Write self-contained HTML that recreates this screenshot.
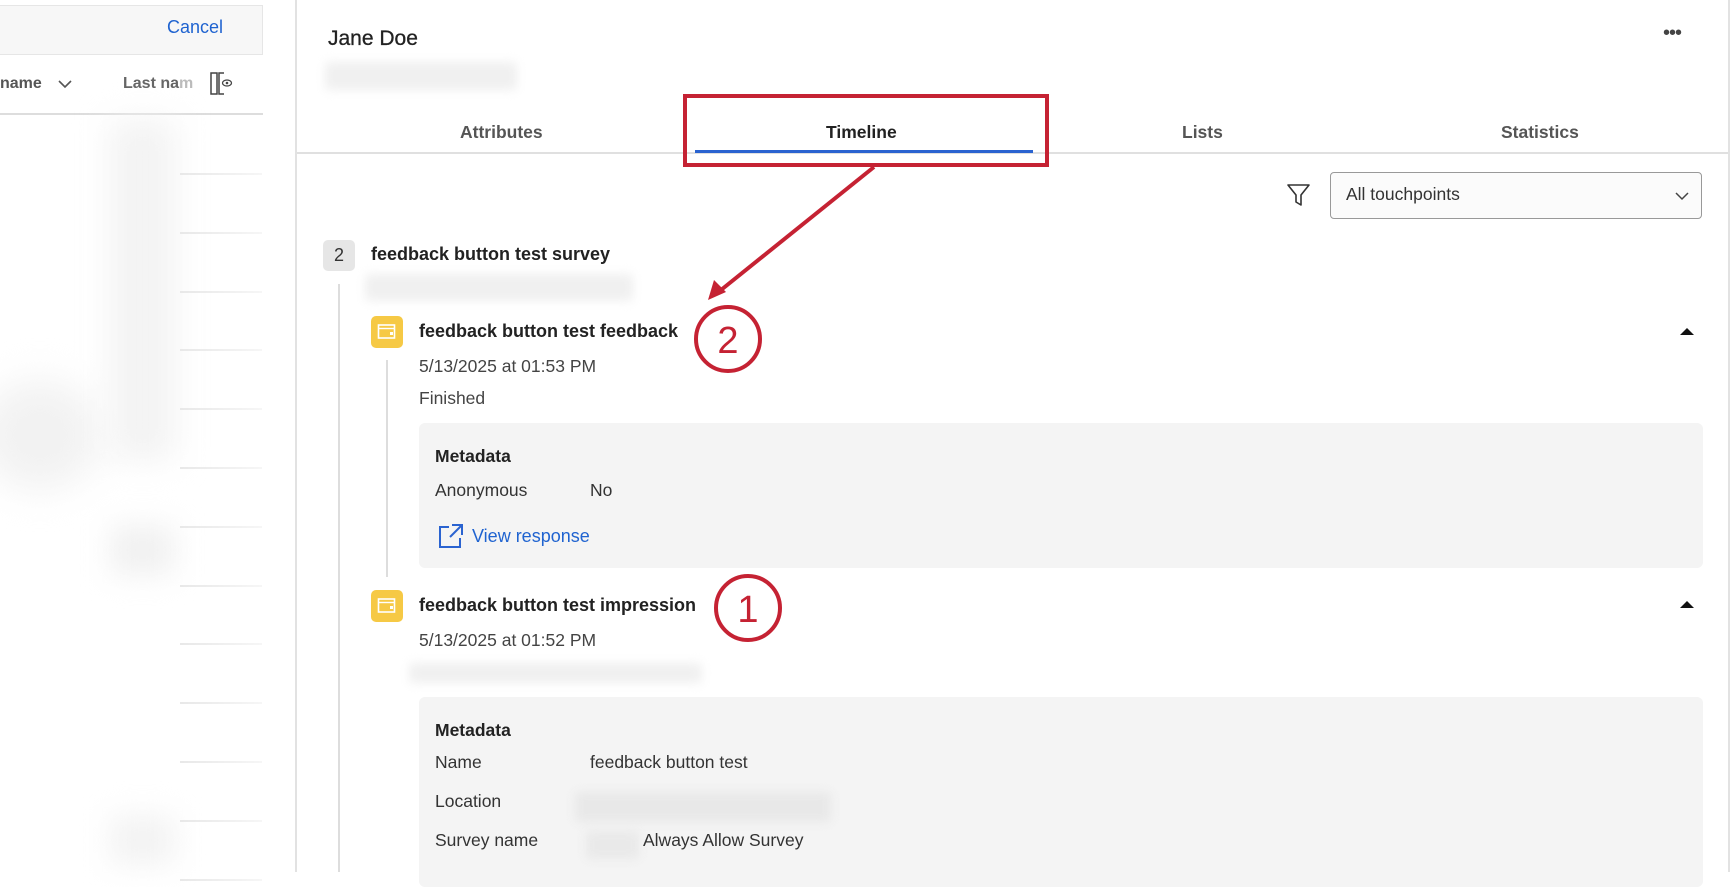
<!DOCTYPE html>
<html><head><meta charset="utf-8"><style>
*{margin:0;padding:0;box-sizing:border-box}
body{width:1732px;height:872px;overflow:hidden;background:#fff;font-family:"Liberation Sans",Arial,sans-serif;color:#333;position:relative}
.a{position:absolute;white-space:nowrap}
.blur{position:absolute;background:#ededed;filter:blur(5px);border-radius:4px}
.t{font-size:17.5px;color:#444}
.b{font-weight:bold;color:#222}
</style></head><body>
<div class="a" style="left:0;top:5px;width:263px;height:50px;background:#f7f7f7;border:1px solid #e6e6e6;border-left:none"></div>
<div class="a" style="left:167px;top:17px;font-size:18px;color:#1f63d0">Cancel</div>
<div class="a b" style="left:0;top:75px;font-size:16px;color:#555">name</div>
<svg class="a" style="left:58px;top:79px" width="14" height="10"><path d="M1 2l6 6 6-6" fill="none" stroke="#555" stroke-width="1.6"/></svg>
<div class="a b" style="left:123px;top:75px;font-size:16px;color:#666">Last na<span style="color:#bbb">m</span></div>
<svg class="a" style="left:210px;top:70px" width="30" height="30"><rect x="1" y="3" width="6" height="21" fill="none" stroke="#444" stroke-width="1.5"/><path d="M14 3h-5v21h5" fill="none" stroke="#444" stroke-width="1.5"/><ellipse cx="17" cy="13" rx="4.5" ry="3" fill="none" stroke="#444" stroke-width="1.3"/><circle cx="17" cy="13" r="1.3" fill="#444"/></svg>
<div class="a" style="left:0;top:113px;width:263px;height:2px;background:#ddd"></div>
<div class="blur" style="left:-20px;top:380px;width:120px;height:110px;background:#f2f2f2;filter:blur(18px);border-radius:50%"></div>
<div class="blur" style="left:110px;top:120px;width:65px;height:340px;background:#f3f3f3;filter:blur(16px)"></div>
<div class="blur" style="left:110px;top:525px;width:65px;height:50px;background:#f1f1f1;filter:blur(14px)"></div>
<div class="blur" style="left:110px;top:815px;width:65px;height:50px;background:#f3f3f3;filter:blur(14px)"></div>
<div id="rows"></div>
<div class="a" style="left:295px;top:0;width:2px;height:872px;background:#e2e2e2"></div>
<div class="a" style="left:1728px;top:0;width:2px;height:872px;background:#e2e2e2"></div>
<div class="a" style="left:328px;top:27px;font-size:21px;color:#222;-webkit-text-stroke:0.3px #222">Jane Doe</div>
<div class="blur" style="left:325px;top:62px;width:192px;height:28px;background:#f0f0f0"></div>
<div class="a" style="left:1663px;top:22px;font-size:20px;color:#444;letter-spacing:-1px">•••</div>
<div class="a b" style="left:460px;top:122px;font-size:17.5px;color:#555">Attributes</div>
<div class="a b" style="left:826px;top:122px;font-size:17.5px;color:#222">Timeline</div>
<div class="a b" style="left:1182px;top:122px;font-size:17.5px;color:#555">Lists</div>
<div class="a b" style="left:1501px;top:122px;font-size:17.5px;color:#555">Statistics</div>
<div class="a" style="left:297px;top:152px;width:1431px;height:2px;background:#e0e0e0"></div>
<div class="a" style="left:695px;top:150px;width:338px;height:3px;background:#2a63d0"></div>
<div class="a" style="left:683px;top:94px;width:366px;height:73px;border:4.5px solid #c52233"></div>
<svg class="a" style="left:0;top:0" width="1732" height="872"><path d="M874 167L716 294" stroke="#c52233" stroke-width="4" fill="none"/><path d="M708 300l6-20 12 12z" fill="#c52233"/>
<circle cx="728" cy="339" r="32" fill="none" stroke="#c52233" stroke-width="4"/>
<circle cx="748" cy="608" r="32" fill="none" stroke="#c52233" stroke-width="4"/>
<text x="728" y="353" font-family="Liberation Sans" font-size="38" fill="#c52233" text-anchor="middle">2</text>
<text x="748" y="622" font-family="Liberation Sans" font-size="38" fill="#c52233" text-anchor="middle">1</text></svg>
<svg class="a" style="left:1286px;top:182px" width="26" height="26"><path d="M2 3h21l-8 10v10l-5-3v-7z" fill="none" stroke="#333" stroke-width="1.6" stroke-linejoin="round"/></svg>
<div class="a" style="left:1330px;top:172px;width:372px;height:47px;border:1.5px solid #999;border-radius:4px;background:#fbfbfb"></div>
<div class="a t" style="left:1346px;top:184px;color:#333">All touchpoints</div>
<svg class="a" style="left:1674px;top:190px" width="16" height="12"><path d="M2 3l6 6 6-6" fill="none" stroke="#444" stroke-width="1.5"/></svg>
<div class="a" style="left:323px;top:240px;width:32px;height:31px;background:#e6e6e6;border-radius:5px;font-size:18px;text-align:center;line-height:31px;color:#333">2</div>
<div class="a b" style="left:371px;top:244px;font-size:18px">feedback button test survey</div>
<div class="blur" style="left:365px;top:274px;width:268px;height:27px;background:#f0f0f0"></div>
<div class="a" style="left:338px;top:284px;width:2px;height:588px;background:#ddd"></div>
<div class="a" style="left:386px;top:360px;width:2px;height:217px;background:#ddd"></div>
<div class="a" style="left:371px;top:316px;width:32px;height:32px;background:#f6c945;border-radius:5px"></div>
<svg class="a" style="left:377px;top:323px" width="20" height="18"><rect x="1.5" y="2" width="16" height="13" fill="none" stroke="#fff" stroke-width="1.6"/><path d="M2 5.5h15" stroke="#fff" stroke-width="1.4"/><rect x="13" y="9" width="3" height="3" fill="#fff"/></svg>
<div class="a b" style="left:419px;top:321px;font-size:18px">feedback button test feedback</div>
<div class="a t" style="left:419px;top:356px">5/13/2025 at 01:53 PM</div>
<div class="a t" style="left:419px;top:388px">Finished</div>
<svg class="a" style="left:1679px;top:327px" width="16" height="9"><path d="M1 8L8 1l7 7z" fill="#111"/></svg>
<div class="a" style="left:419px;top:423px;width:1284px;height:145px;background:#f4f4f4;border-radius:6px"></div>
<div class="a b" style="left:435px;top:446px;font-size:17.5px">Metadata</div>
<div class="a t" style="left:435px;top:480px;color:#333">Anonymous</div>
<div class="a t" style="left:590px;top:480px;color:#333">No</div>
<svg class="a" style="left:438px;top:523px" width="26" height="26"><path d="M11 4H2v20h20v-9" fill="none" stroke="#2a63d0" stroke-width="2"/><path d="M14 2h10v10M24 2L12 14" fill="none" stroke="#2a63d0" stroke-width="2"/></svg>
<div class="a t" style="left:472px;top:526px;color:#1f63d0;font-size:18px">View response</div>
<div class="a" style="left:371px;top:590px;width:32px;height:32px;background:#f6c945;border-radius:5px"></div>
<svg class="a" style="left:377px;top:597px" width="20" height="18"><rect x="1.5" y="2" width="16" height="13" fill="none" stroke="#fff" stroke-width="1.6"/><path d="M2 5.5h15" stroke="#fff" stroke-width="1.4"/><rect x="13" y="9" width="3" height="3" fill="#fff"/></svg>
<div class="a b" style="left:419px;top:595px;font-size:18px">feedback button test impression</div>
<div class="a t" style="left:419px;top:630px">5/13/2025 at 01:52 PM</div>
<svg class="a" style="left:1679px;top:600px" width="16" height="9"><path d="M1 8L8 1l7 7z" fill="#111"/></svg>
<div class="blur" style="left:409px;top:663px;width:293px;height:20px;background:#f0f0f0"></div>
<div class="a" style="left:419px;top:697px;width:1284px;height:190px;background:#f4f4f4;border-radius:6px"></div>
<div class="a b" style="left:435px;top:720px;font-size:17.5px">Metadata</div>
<div class="a t" style="left:435px;top:752px;color:#333">Name</div>
<div class="a t" style="left:590px;top:752px;color:#333">feedback button test</div>
<div class="a t" style="left:435px;top:791px;color:#333">Location</div>
<div class="blur" style="left:575px;top:792px;width:256px;height:30px;background:#e8e8e8"></div>
<div class="a t" style="left:435px;top:830px;color:#333">Survey name</div>
<div class="blur" style="left:586px;top:831px;width:53px;height:28px;background:#e9e9e9"></div>
<div class="a t" style="left:643px;top:830px;color:#333">Always Allow Survey</div>
<script>
var r=document.getElementById('rows'),h='';
for(var i=0;i<13;i++){h+='<div class="a" style="left:180px;top:'+(173+i*58.8)+'px;width:82px;height:2px;background:linear-gradient(90deg,#e8e8e8,#f6f6f6)"></div>';}
r.innerHTML=h;
</script>
</body></html>
